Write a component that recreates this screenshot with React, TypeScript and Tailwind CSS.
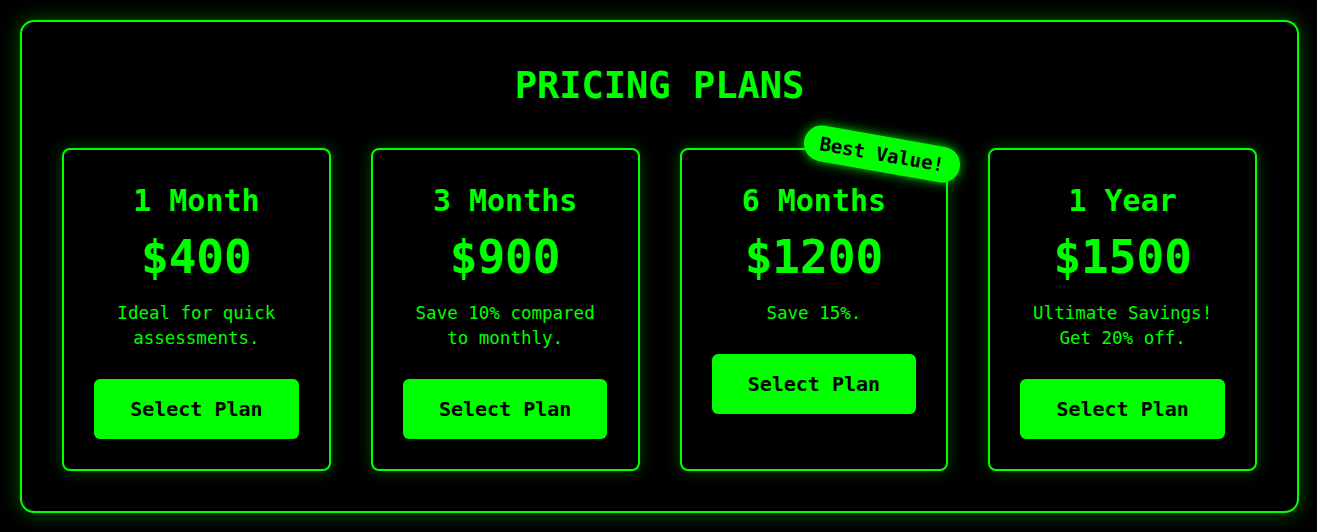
type Plan = {
  name: string
  price: string
  blurb: string[]
  badge?: string
}

const plans: Plan[] = [
  { name: '1 Month', price: '$400', blurb: ['Ideal for quick', 'assessments.'] },
  { name: '3 Months', price: '$900', blurb: ['Save 10% compared', 'to monthly.'] },
  { name: '6 Months', price: '$1200', blurb: ['Save 15%.'], badge: 'Best Value!' },
  { name: '1 Year', price: '$1500', blurb: ['Ultimate Savings!', 'Get 20% off.'] },
]

function PlanCard({ plan }: { plan: Plan }) {
  return (
    <div className="relative flex flex-col items-center rounded-lg border-2 border-[#00ff00] bg-black p-[30px] text-center shadow-[0_0_16px_rgba(0,255,0,0.28)]">
      {plan.badge && (
        <span className="absolute right-[-15px] top-[-14px] rotate-[10deg] whitespace-nowrap rounded-full bg-[#00ff00] px-4 py-[7px] text-[19px] font-bold leading-[22px] text-black shadow-[0_0_12px_rgba(0,255,0,0.75)]">
          {plan.badge}
        </span>
      )}
      <h3 className="pt-px text-[30px] font-bold leading-[40px]">{plan.name}</h3>
      <div className="mt-2 text-[46px] font-bold leading-[56px]">{plan.price}</div>
      <p className="mt-4 text-[17.5px] leading-[25px]">
        {plan.blurb.map((line) => (
          <span key={line} className="block">
            {line}
          </span>
        ))}
      </p>
      <button className="mt-[28px] h-[60px] whitespace-nowrap rounded-md bg-[#00ff00] px-9 text-[20px] font-bold text-black">
        Select Plan
      </button>
    </div>
  )
}

export default function App() {
  return (
    <div className="min-h-screen bg-black py-5 font-['DejaVu_Sans_Mono',monospace] text-[#00ff00]">
      <div className="ml-5 w-[1279px] rounded-[14px] border-2 border-[#00ff00] p-10 shadow-[0_0_20px_rgba(0,255,0,0.35)]">
        <h2 className="mb-[38px] text-center text-[37px] font-bold leading-[48px]">PRICING PLANS</h2>
        <div className="grid grid-cols-4 gap-10">
          {plans.map((plan) => (
            <PlanCard key={plan.name} plan={plan} />
          ))}
        </div>
      </div>
    </div>
  )
}
